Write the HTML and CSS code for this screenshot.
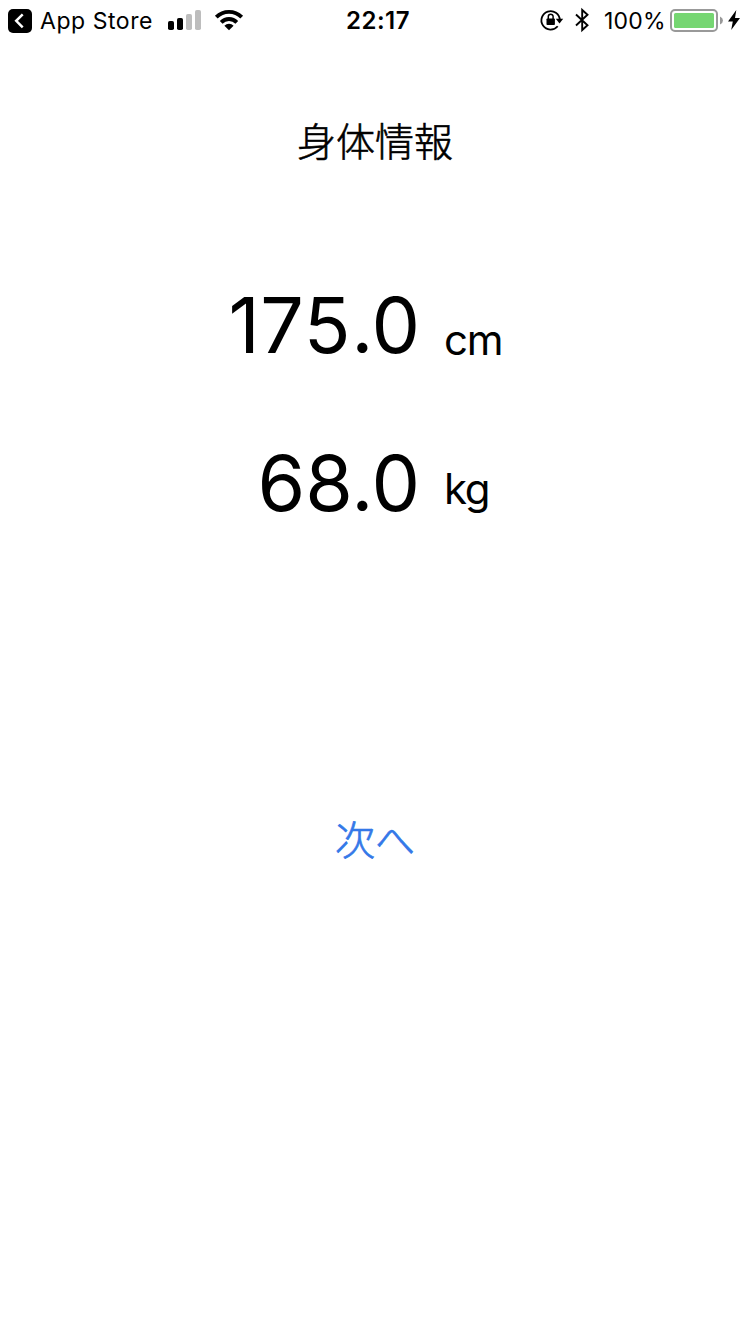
FILE: index.html
```
<!DOCTYPE html>
<html lang="ja">
<head>
<meta charset="utf-8">
<title>身体情報</title>
<link rel="stylesheet" href="styles.css">
</head>
<body>
<header class="status">
  <div class="status-left">
    <svg class="back" width="24" height="24" viewBox="0 0 24 24"><rect width="24" height="24" rx="5"/><path d="M14.700 5.300 8.200 11.800l6.500 6.500" fill="none" stroke="#fff" stroke-width="2.500"/></svg>
    <span class="app">App Store</span>
    <svg class="signal" width="33" height="20" viewBox="0 0 33 20"><rect y="11" width="6" height="9" rx="1.800"/><rect x="9" y="8" width="6" height="12" rx="1.800"/><g fill="#bdbdbd"><rect x="18" y="4" width="6" height="16" rx="1.800"/><rect x="27" width="6" height="20" rx="1.800"/></g></svg>
    <svg class="wifi" width="28" height="20" viewBox="0 0 28 20"><path d="M1.300 7.100a18 18 0 0 1 25.400 0M6.200 12.300a11 11 0 0 1 15.600 0" fill="none" stroke="#000" stroke-width="3.900"/><path d="M9.400 15.700a6.500 6.500 0 0 1 9.200 0L14 20.200z"/></svg>
  </div>
  <time class="clock">22:17</time>
  <div class="status-right">
    <svg class="lock" width="24" height="22" viewBox="0 0 24 22"><path d="M17.700 17.200A9.200 9.200 0 1 1 19.800 11" fill="none" stroke="#000" stroke-width="1.800"/><path d="M15.800 9.700h7.400l-3.700 4.700z"/><rect x="6.500" y="9.500" width="8.400" height="6.500" rx=".8"/><path d="M8.300 10V7.600a2.400 2.400 0 0 1 4.800 0V10" fill="none" stroke="#000" stroke-width="1.500"/></svg>
    <svg class="bluetooth" width="14" height="24" viewBox="0 0 14 24"><path d="M1 6.500 12.500 17.200 7.200 22V2l5.300 4.800L1 17.500" fill="none" stroke="#000" stroke-width="1.900"/></svg>
    <span class="percent">100%</span>
    <svg class="battery" width="53" height="24" viewBox="0 0 53 24"><rect x="1" y="1" width="46" height="21" rx="4" fill="none" stroke="#999" stroke-width="2"/><rect x="4" y="4" width="40" height="15" rx="1.500" fill="#76d672"/><path d="M50 7.500q3 1.500 3 4t-3 4z" fill="#999"/></svg>
    <svg class="bolt" width="12" height="20" viewBox="0 0 12 20"><path d="M8.300 0 0 11.400h4.800L3.200 20 12 8H7z"/></svg>
  </div>
</header>
<main class="screen">
  <h1 class="title">身体情報</h1>
  <div class="row height"><span class="value"><span class="whole">175</span>.0</span><span class="unit">cm</span></div>
  <div class="row weight"><span class="value">68.0</span><span class="unit">kg</span></div>
  <button class="next" type="button">次へ</button>
</main>
</body>
</html>
```
FILE: styles.css
```
* { box-sizing: border-box; }
body {
  margin: 0;
  min-height: 1334px;
  background: #fff;
  color: #000;
  font-family: Inter, "Noto Sans CJK JP", sans-serif;
}
svg { display: block; flex: none; overflow: visible; }
.status {
  display: grid;
  grid-template-columns: 338px 66px 1fr;
  height: 40px;
  padding: 0 10px 0 8px;
  font-size: 23px;
  line-height: 42px;
  white-space: nowrap;
}
.status-left, .status-right { display: flex; align-items: flex-start; }
.status-right { justify-content: flex-end; }
.back { margin-top: 9px; }
.app { width: 136px; padding-left: 8px; letter-spacing: .55px; }
.signal { margin-top: 10px; }
.wifi { margin: 10px 0 0 14px; }
.clock { font-size: 24px; font-weight: 600; letter-spacing: .5px; }
.lock { margin: 9px 11px 0 0; }
.bluetooth { margin-top: 8px; }
.percent { width: 81px; padding-left: 15px; letter-spacing: .2px; }
.battery { margin-top: 9px; }
.bolt { margin: 10px 0 0 5px; }
.screen { display: flex; flex-direction: column; align-items: center; padding-top: 70px; }
.title {
  margin: 0;
  font: 300 39px/58px "Noto Sans CJK JP", sans-serif;
  -webkit-text-stroke: .6px currentColor;
}
.row { display: grid; grid-template-columns: 420px 1fr; column-gap: 24px; width: 750px; height: 90px; }
.height { margin-top: 112px; }
.weight { margin-top: 68px; }
.value { text-align: right; font-size: 77px; line-height: 90px; }
.whole { letter-spacing: .6px; }
.unit { font-size: 42px; line-height: 50px; letter-spacing: -1.300px; }
.height .unit { padding-top: 35px; }
.weight .unit { padding-top: 26px; }
.next {
  margin: 281px 0 0;
  padding: 0;
  border: 0;
  background: none;
  color: #3478e8;
  font: 300 40px/58px "Noto Sans CJK JP", sans-serif;
  -webkit-text-stroke: .7px currentColor;
}
```
